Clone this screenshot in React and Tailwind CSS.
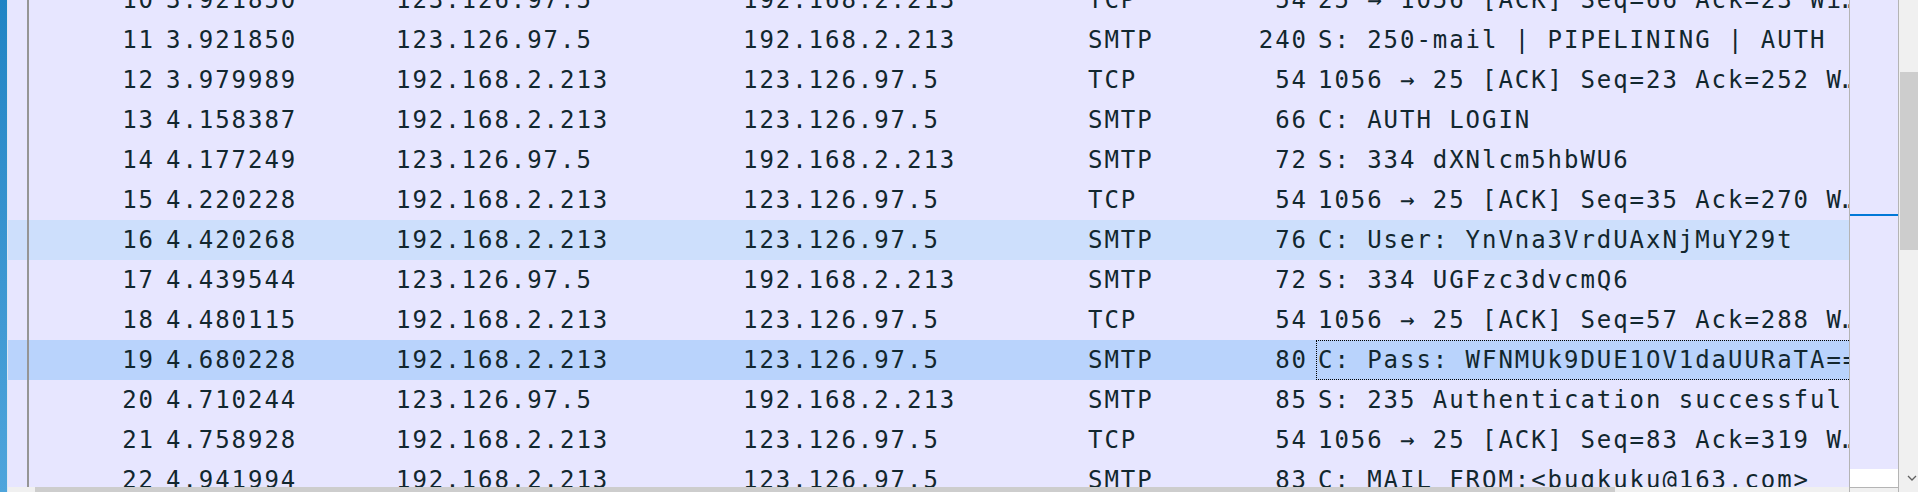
const packets = [
  { no: 10, time: "3.921850", src: "123.126.97.5", dst: "192.168.2.213", proto: "TCP", len: 54, info: "25 → 1056 [ACK] Seq=66 Ack=23 Wi…" },
  { no: 11, time: "3.921850", src: "123.126.97.5", dst: "192.168.2.213", proto: "SMTP", len: 240, info: "S: 250-mail | PIPELINING | AUTH" },
  { no: 12, time: "3.979989", src: "192.168.2.213", dst: "123.126.97.5", proto: "TCP", len: 54, info: "1056 → 25 [ACK] Seq=23 Ack=252 W…" },
  { no: 13, time: "4.158387", src: "192.168.2.213", dst: "123.126.97.5", proto: "SMTP", len: 66, info: "C: AUTH LOGIN" },
  { no: 14, time: "4.177249", src: "123.126.97.5", dst: "192.168.2.213", proto: "SMTP", len: 72, info: "S: 334 dXNlcm5hbWU6" },
  { no: 15, time: "4.220228", src: "192.168.2.213", dst: "123.126.97.5", proto: "TCP", len: 54, info: "1056 → 25 [ACK] Seq=35 Ack=270 W…" },
  { no: 16, time: "4.420268", src: "192.168.2.213", dst: "123.126.97.5", proto: "SMTP", len: 76, info: "C: User: YnVna3VrdUAxNjMuY29t", hover: true },
  { no: 17, time: "4.439544", src: "123.126.97.5", dst: "192.168.2.213", proto: "SMTP", len: 72, info: "S: 334 UGFzc3dvcmQ6" },
  { no: 18, time: "4.480115", src: "192.168.2.213", dst: "123.126.97.5", proto: "TCP", len: 54, info: "1056 → 25 [ACK] Seq=57 Ack=288 W…" },
  { no: 19, time: "4.680228", src: "192.168.2.213", dst: "123.126.97.5", proto: "SMTP", len: 80, info: "C: Pass: WFNMUk9DUE1OV1daUURaTA==", selected: true },
  { no: 20, time: "4.710244", src: "123.126.97.5", dst: "192.168.2.213", proto: "SMTP", len: 85, info: "S: 235 Authentication successful" },
  { no: 21, time: "4.758928", src: "192.168.2.213", dst: "123.126.97.5", proto: "TCP", len: 54, info: "1056 → 25 [ACK] Seq=83 Ack=319 W…" },
  { no: 22, time: "4.941994", src: "192.168.2.213", dst: "123.126.97.5", proto: "SMTP", len: 83, info: "C: MAIL FROM:<bugkuku@163.com>" },
];

const PacketRow = ({ p }) => {
  const bg = p.selected ? "bg-[#b9d3fc]" : p.hover ? "bg-[#cddffc]" : "bg-[#e7e6ff]";

  return (
    <div className={`flex h-[40px] shrink-0 items-center ${bg}`}>
      <div className="w-[19px] shrink-0" />
      <div className="h-full w-[2px] shrink-0 bg-[#959595]" />
      <div className="w-[137px] shrink-0 pr-[11px] text-right">{p.no}</div>
      <div className="w-[230px] shrink-0">{p.time}</div>
      <div className="w-[347px] shrink-0">{p.src}</div>
      <div className="w-[345px] shrink-0">{p.dst}</div>
      <div className="w-[112px] shrink-0">{p.proto}</div>
      <div className="w-[116px] shrink-0 pr-[8px] text-right">{p.len}</div>
      <div
        className={`flex h-full min-w-0 flex-1 items-center overflow-hidden whitespace-nowrap ${
          p.selected ? "border-y border-l border-dotted border-black pl-[1px]" : "pl-[2px]"
        }`}
      >
        {p.info}
      </div>
    </div>
  );
};

export default function App() {
  return (
    <div className="flex h-[492px] w-[1918px] overflow-hidden bg-[#e7e6ff] font-['DejaVu_Sans_Mono',monospace] text-[24px] leading-[40px] tracking-[1.95px] text-[#12272e]">
      {/* desktop edge */}
      <div className="w-[7px] shrink-0 bg-gradient-to-b from-[#1f84c4] to-[#4ea5dc]" />
      <div className="w-[1px] shrink-0 bg-[#dfe8f2]" />

      {/* packet list */}
      <div className="flex w-[1841px] shrink-0 flex-col">
        <div className="h-[487px] overflow-hidden">
          <div className="-mt-[20px] flex flex-col">
            {packets.map((p) => (
              <PacketRow key={p.no} p={p} />
            ))}
          </div>
        </div>
        <div className="flex h-[5px] bg-[#f0f0f0]">
          <div className="ml-[27px] w-[1580px] bg-[#cdcdcd]" />
        </div>
      </div>

      {/* packet map */}
      <div className="flex w-[50px] shrink-0 flex-col border-x border-[#b4b4b4]">
        <div className="flex h-[469px] flex-col bg-[#e7e6ff]">
          <div className="h-[214px]" />
          <div className="h-[2px] bg-[#0078d7]" />
        </div>
        <div className="h-[18px] bg-white" />
        <div className="flex-1 border-t border-[#b4b4b4] bg-[#f0f0f0]" />
      </div>

      {/* vertical scrollbar */}
      <div className="flex w-[19px] shrink-0 flex-col bg-[#f0f0f0]">
        <div className="h-[72px]" />
        <div className="ml-[1px] h-[178px] bg-[#cdcdcd]" />
        <div className="flex flex-1 items-end justify-end pb-[10px]">
          <svg width="10" height="7" viewBox="0 0 10 7" className="mr-[1px]">
            <path d="M1 1 L5 5 L9 1" fill="none" stroke="#606060" strokeWidth="1.3" />
          </svg>
        </div>
      </div>
    </div>
  );
}
